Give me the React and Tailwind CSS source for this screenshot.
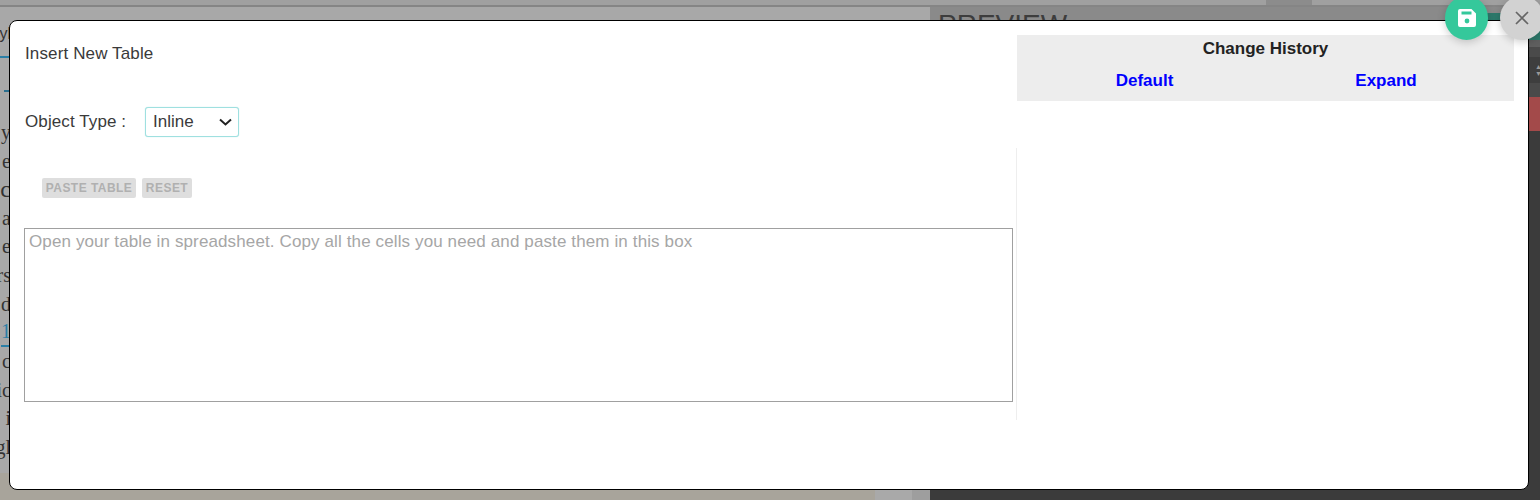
const sans = "font-['Liberation_Sans',Arial,sans-serif]";

const SIDE_LINES = [
  { text: 'y' },
  { text: 'e' },
  { text: 'oc', large: true },
  { text: 'a' },
  { text: 'e' },
  { text: 'rs' },
  { text: 'd' },
  { text: '1', link: true },
  { text: 'c' },
  { text: 'ic' },
  { text: ', i' },
  { text: 'gl' },
];

function SaveIcon() {
  return (
    <svg width="18" height="18" viewBox="0 0 18 18">
      <path
        fill="#fff"
        fillRule="evenodd"
        d="M2 0h11.5L18 4.5V16a2 2 0 0 1-2 2H2a2 2 0 0 1-2-2V2a2 2 0 0 1 2-2Zm1.5 2.5v3h10v-3ZM9 9.6a2.4 2.4 0 1 0 0 4.8 2.4 2.4 0 0 0 0-4.8Z"
      />
    </svg>
  );
}

function CloseIcon() {
  return (
    <svg width="16" height="16" viewBox="0 0 16 16">
      <path d="M2 2l12 12M14 2L2 14" stroke="#666" strokeWidth="1.7" fill="none" />
    </svg>
  );
}

function Backdrop() {
  return (
    <div className="flex flex-col h-[500px]">
      {/* top strip */}
      <div className="flex h-[5px] bg-[#a0a0a0] justify-end shrink-0">
        <div className="w-[46px] bg-[#8c8c8c] mr-[228px]" />
      </div>
      <div className="h-[2px] bg-[#858585] shrink-0" />

      <div className="flex flex-1 min-h-0">
        {/* left pane */}
        <div className="w-[930px] shrink-0 flex flex-col bg-[#a8a8a8]">
          <div className="flex-1 overflow-hidden">
            <div className="w-[11px] flex justify-end text-[16px] leading-[20px] mt-[17px] text-[#333] font-['Liberation_Sans',sans-serif] whitespace-nowrap">
              Styl
            </div>
            <div className="w-[10px] h-[2px] bg-[#2b7fa6] mt-[12px]" />
            <div className="w-[10px] h-[2px] mt-[32px] flex justify-end">
              <div className="w-[6px] bg-[#2b6f8f]" />
            </div>
            <div className="w-[11px] mt-[26px] flex flex-col items-end font-['Liberation_Serif',serif] text-[20px] leading-[28.6px] text-[#333] whitespace-nowrap">
              {SIDE_LINES.map((line, i) => (
                <div
                  key={i}
                  className={
                    line.link
                      ? 'text-[#2b7fa6] border-b-2 border-[#2b7fa6] leading-[27px]'
                      : line.large
                        ? 'text-[24px]'
                        : ''
                  }
                >
                  {line.text}
                </div>
              ))}
            </div>
          </div>
          <div className="h-[27px] flex shrink-0">
            <div className="w-[875px] bg-[#a8a49b]" />
            <div className="w-[37px] bg-[#a9a9a9]" />
            <div className="flex-1 bg-[#9e9e9e]" />
          </div>
        </div>

        {/* right pane */}
        <div className="flex-1 flex flex-col bg-[#3b3b3b]">
          <div className="h-[33px] bg-[#8a8a8a] flex justify-between shrink-0">
            <div className={`${sans} text-[28px] leading-[30px] pl-[8px] pt-[3px] text-[#3d3d3d]`}>PREVIEW</div>
            <div className="w-[60px] h-[27px] mt-[6px] bg-[#2d7a6c]" />
          </div>
          <div className="h-[7px] bg-[#5f5f5f] shrink-0" />
          <div className="h-[10px] bg-[#4a4a4a] shrink-0" />
          <div className="h-[26px] bg-[#3e3e3e] shrink-0 flex justify-end items-center">
            <div className="w-[5px] text-[#999] text-[7px] leading-[7px]">
              ▲<br />▼
            </div>
          </div>
          <div className="h-[14px] bg-[#4a4a4a] shrink-0" />
          <div className="h-[34px] bg-[#a34a4a] shrink-0" />
        </div>
      </div>
    </div>
  );
}

function Modal() {
  return (
    <div className={`${sans} absolute left-[9px] top-[20px] w-[1520px] h-[470px] bg-white border border-black rounded-[8px] flex text-[#3a3a3a]`}>
      <div className="w-[1007px] shrink-0 pl-[15px] flex flex-col">
        <div className="text-[17px] leading-[20px] mt-[23px] tracking-[0.13px]">Insert New Table</div>

        <div className="flex items-center mt-[43px] h-[30px]">
          <span className="w-[120px] text-[17px] leading-[20px] tracking-[0.1px]">Object Type :</span>
          <div className="relative w-[94px] h-[30px]">
            <select className="w-full h-full appearance-none border border-[#9fe0e0] rounded-[3px] bg-white text-[17px] pl-[7px] text-[#3a3a3a] outline-none shadow-[0_0_1px_#9fe0e0]">
              <option>Inline</option>
            </select>
            <svg className="absolute right-[7px] top-[11px] pointer-events-none" width="13" height="8" viewBox="0 0 13 8">
              <path d="M1 1.5l5.5 5 5.5-5" stroke="#222" strokeWidth="2" fill="none" />
            </svg>
          </div>
        </div>

        <div className="flex gap-[6px] mt-[41px] ml-[17px]">
          <button className="h-[20px] w-[94px] bg-[#dedede] rounded-[2px] text-[12px] font-bold tracking-[0.45px] text-[#b0b0b0]">
            PASTE TABLE
          </button>
          <button className="h-[20px] w-[50px] bg-[#dedede] rounded-[2px] text-[12px] font-bold tracking-[0.45px] text-[#b0b0b0]">
            RESET
          </button>
        </div>

        <textarea
          placeholder="Open your table in spreadsheet. Copy all the cells you need and paste them in this box"
          className="mt-[30px] -ml-px w-[989px] h-[174px] border border-[#a0a0a0] px-[4px] py-[3px] text-[17px] tracking-[0.12px] leading-[20px] outline-none resize-none placeholder:text-[#a6a6a6]"
        />
      </div>

      <div className="flex-1 flex flex-col">
        <div className="mt-[14px] w-[497px] h-[66px] bg-[#ededed] shrink-0 flex flex-col items-center">
          <div className="text-[17px] leading-[18px] font-bold text-[#222] mt-[5px]">Change History</div>
          <div className="flex w-full mt-[13px] text-[17px] leading-[20px] font-bold text-[#0000ff]">
            <span className="w-[255px] text-center">Default</span>
            <span className="w-[228px] text-center">Expand</span>
          </div>
        </div>
        <div className="mt-[47px] -ml-px h-[272px] border-l border-[#eeeeee]" />
      </div>
    </div>
  );
}

export default function App() {
  return (
    <div className="relative w-[1540px] h-[500px] overflow-hidden">
      <Backdrop />
      <Modal />
      {/* floating actions */}
      <button className="absolute left-[1445px] top-[-4px] w-[43px] h-[44px] rounded-full bg-[#35c89b] flex items-center justify-center shadow-[0_2px_8px_rgba(0,0,0,0.2)]">
        <SaveIcon />
      </button>
      <button className="absolute left-[1500px] top-[-4px] w-[44px] h-[44px] rounded-full bg-[#d2d2d2] flex items-center justify-center shadow-[0_2px_8px_rgba(0,0,0,0.2)]">
        <CloseIcon />
      </button>
    </div>
  );
}
